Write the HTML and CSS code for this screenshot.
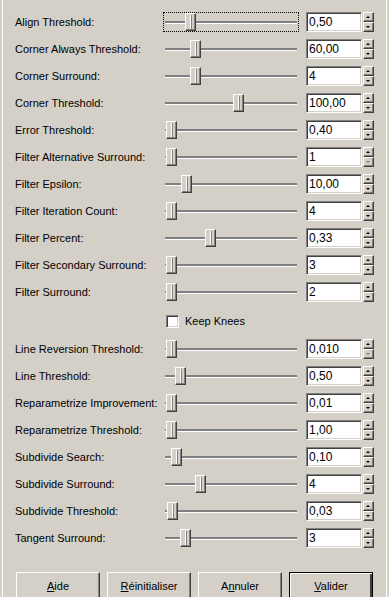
FILE: index.html
```html
<!DOCTYPE html>
<html lang="fr">
  <head>
    <meta charset="UTF-8" />
    <meta name="viewport" content="width=device-width, initial-scale=1.0" />
    <title>Potrace</title>
    <link rel="stylesheet" href="styles.css">
  </head>
  <body>
    <div class="panel">
      <div class="rows">
        <div class="row">
          <span class="label">Align Threshold:</span>
          <div class="slider focus"><div class="track"></div><div class="thumb" style="left: 22px"></div></div>
          <div class="spin"><div class="field">0,50</div><div class="arrows"><span class="arrow up"></span><span class="arrow down"></span></div></div>
        </div>
        <div class="row">
          <span class="label">Corner Always Threshold:</span>
          <div class="slider"><div class="track"></div><div class="thumb" style="left: 27px"></div></div>
          <div class="spin"><div class="field">60,00</div><div class="arrows"><span class="arrow up"></span><span class="arrow down"></span></div></div>
        </div>
        <div class="row">
          <span class="label">Corner Surround:</span>
          <div class="slider"><div class="track"></div><div class="thumb" style="left: 27px"></div></div>
          <div class="spin"><div class="field">4</div><div class="arrows"><span class="arrow up"></span><span class="arrow down"></span></div></div>
        </div>
        <div class="row">
          <span class="label">Corner Threshold:</span>
          <div class="slider"><div class="track"></div><div class="thumb" style="left: 70px"></div></div>
          <div class="spin"><div class="field">100,00</div><div class="arrows"><span class="arrow up"></span><span class="arrow down"></span></div></div>
        </div>
        <div class="row">
          <span class="label">Error Threshold:</span>
          <div class="slider"><div class="track"></div><div class="thumb" style="left: 3px"></div></div>
          <div class="spin"><div class="field">0,40</div><div class="arrows"><span class="arrow up"></span><span class="arrow down"></span></div></div>
        </div>
        <div class="row">
          <span class="label">Filter Alternative Surround:</span>
          <div class="slider"><div class="track"></div><div class="thumb" style="left: 3px"></div></div>
          <div class="spin"><div class="field">1</div><div class="arrows"><span class="arrow up"></span><span class="arrow down disabled"></span></div></div>
        </div>
        <div class="row">
          <span class="label">Filter Epsilon:</span>
          <div class="slider"><div class="track"></div><div class="thumb" style="left: 18px"></div></div>
          <div class="spin"><div class="field">10,00</div><div class="arrows"><span class="arrow up"></span><span class="arrow down"></span></div></div>
        </div>
        <div class="row">
          <span class="label">Filter Iteration Count:</span>
          <div class="slider"><div class="track"></div><div class="thumb" style="left: 3px"></div></div>
          <div class="spin"><div class="field">4</div><div class="arrows"><span class="arrow up"></span><span class="arrow down"></span></div></div>
        </div>
        <div class="row">
          <span class="label">Filter Percent:</span>
          <div class="slider"><div class="track"></div><div class="thumb" style="left: 42px"></div></div>
          <div class="spin"><div class="field">0,33</div><div class="arrows"><span class="arrow up"></span><span class="arrow down"></span></div></div>
        </div>
        <div class="row">
          <span class="label">Filter Secondary Surround:</span>
          <div class="slider"><div class="track"></div><div class="thumb" style="left: 3px"></div></div>
          <div class="spin"><div class="field">3</div><div class="arrows"><span class="arrow up"></span><span class="arrow down"></span></div></div>
        </div>
        <div class="row">
          <span class="label">Filter Surround:</span>
          <div class="slider"><div class="track"></div><div class="thumb" style="left: 3px"></div></div>
          <div class="spin"><div class="field">2</div><div class="arrows"><span class="arrow up"></span><span class="arrow down"></span></div></div>
        </div>

        <div class="check-row">
          <span class="checkbox"></span>
          <span class="check-label">Keep Knees</span>
        </div>

        <div class="row">
          <span class="label">Line Reversion Threshold:</span>
          <div class="slider"><div class="track"></div><div class="thumb" style="left: 3px"></div></div>
          <div class="spin"><div class="field">0,010</div><div class="arrows"><span class="arrow up"></span><span class="arrow down disabled"></span></div></div>
        </div>
        <div class="row">
          <span class="label">Line Threshold:</span>
          <div class="slider"><div class="track"></div><div class="thumb" style="left: 12px"></div></div>
          <div class="spin"><div class="field">0,50</div><div class="arrows"><span class="arrow up"></span><span class="arrow down"></span></div></div>
        </div>
        <div class="row">
          <span class="label">Reparametrize Improvement:</span>
          <div class="slider"><div class="track"></div><div class="thumb" style="left: 3px"></div></div>
          <div class="spin"><div class="field">0,01</div><div class="arrows"><span class="arrow up"></span><span class="arrow down"></span></div></div>
        </div>
        <div class="row">
          <span class="label">Reparametrize Threshold:</span>
          <div class="slider"><div class="track"></div><div class="thumb" style="left: 3px"></div></div>
          <div class="spin"><div class="field">1,00</div><div class="arrows"><span class="arrow up"></span><span class="arrow down"></span></div></div>
        </div>
        <div class="row">
          <span class="label">Subdivide Search:</span>
          <div class="slider"><div class="track"></div><div class="thumb" style="left: 8px"></div></div>
          <div class="spin"><div class="field">0,10</div><div class="arrows"><span class="arrow up"></span><span class="arrow down"></span></div></div>
        </div>
        <div class="row">
          <span class="label">Subdivide Surround:</span>
          <div class="slider"><div class="track"></div><div class="thumb" style="left: 32px"></div></div>
          <div class="spin"><div class="field">4</div><div class="arrows"><span class="arrow up"></span><span class="arrow down"></span></div></div>
        </div>
        <div class="row">
          <span class="label">Subdivide Threshold:</span>
          <div class="slider"><div class="track"></div><div class="thumb" style="left: 4px"></div></div>
          <div class="spin"><div class="field">0,03</div><div class="arrows"><span class="arrow up"></span><span class="arrow down"></span></div></div>
        </div>
        <div class="row">
          <span class="label">Tangent Surround:</span>
          <div class="slider"><div class="track"></div><div class="thumb" style="left: 17px"></div></div>
          <div class="spin"><div class="field">3</div><div class="arrows"><span class="arrow up"></span><span class="arrow down"></span></div></div>
        </div>
      </div>

      <div class="buttons">
        <button class="btn"><u>A</u>ide</button>
        <button class="btn"><u>R</u>éinitialiser</button>
        <button class="btn">A<u>n</u>nuler</button>
        <button class="btn default"><u>V</u>alider</button>
      </div>
    </div>
  </body>
</html>
```

FILE: styles.css
```css
body {
  margin: 0;
  background-color: #d4d0c8;
  font-family: "Liberation Sans", Arial, sans-serif;
  font-size: 11px;
  color: #000;
  overflow: hidden;
}
.panel {
  box-sizing: border-box;
  margin-left: 2px;
  width: 385px;
  height: 597px;
  padding: 8px 0 0 12px;
  border-left: 1px solid #fff;
  border-right: 1px solid #fff;
}
.row {
  display: flex;
  align-items: center;
  height: 27px;
}
.label {
  width: 148px;
  padding-top: 1px;
  white-space: nowrap;
}
.slider {
  position: relative;
  box-sizing: border-box;
  width: 136px;
  height: 20px;
  margin-right: 7px;
  margin-top: 1px;
}
.slider.focus {
  outline: 1px dotted #000;
  outline-offset: -1px;
}
.track {
  position: absolute;
  left: 2px;
  right: 2px;
  top: 9px;
  height: 2px;
  background-color: #808080;
  border-bottom: 1px solid #fff;
}
.thumb {
  position: absolute;
  top: 1px;
  box-sizing: border-box;
  width: 11px;
  height: 18px;
  background-color: #d4d0c8;
  border-top: 1px solid #fff;
  border-left: 1px solid #fff;
  border-right: 1px solid #404040;
  border-bottom: 1px solid #404040;
  box-shadow: inset -1px -1px 0 #808080;
}
.thumb::after {
  content: "";
  position: absolute;
  left: 4px;
  top: 1px;
  bottom: 1px;
  width: 1px;
  background-color: #fff;
  border-right: 1px solid #808080;
}
.spin {
  display: flex;
  align-items: center;
}
.field {
  box-sizing: border-box;
  width: 56px;
  height: 20px;
  padding-left: 2px;
  background-color: #fff;
  border-top: 1px solid #808080;
  border-left: 1px solid #808080;
  border-right: 1px solid #fff;
  border-bottom: 1px solid #fff;
  box-shadow: inset 1px 1px 0 #404040, inset -1px -1px 0 #d4d0c8;
  font-size: 12px;
  line-height: 18px;
}
.arrows {
  display: flex;
  flex-direction: column;
  margin-left: 1px;
  width: 11px;
  height: 20px;
}
.arrow {
  position: relative;
  box-sizing: border-box;
  height: 10px;
  background-color: #d4d0c8;
  border-top: 1px solid #fff;
  border-left: 1px solid #fff;
  border-right: 1px solid #404040;
  border-bottom: 1px solid #404040;
  box-shadow: inset -1px -1px 0 #808080;
}
.arrow::after {
  content: "";
  position: absolute;
  left: 2px;
  width: 0;
  height: 0;
  border-left: 2px solid transparent;
  border-right: 2px solid transparent;
}
.arrow.up::after {
  top: 3px;
  border-bottom: 2px solid #000;
}
.arrow.down::after {
  top: 3px;
  border-top: 2px solid #000;
}
.arrow.down.disabled::after {
  border-top-color: #808080;
}
.check-row {
  display: flex;
  align-items: center;
  height: 30px;
  padding-left: 151px;
}
.checkbox {
  box-sizing: border-box;
  width: 13px;
  height: 13px;
  margin-top: 2px;
  background-color: #fff;
  border-top: 1px solid #808080;
  border-left: 1px solid #808080;
  border-right: 1px solid #fff;
  border-bottom: 1px solid #fff;
  box-shadow: inset 1px 1px 0 #404040, inset -1px -1px 0 #d4d0c8;
}
.check-label {
  margin-left: 6px;
  margin-top: 2px;
}
.buttons {
  display: flex;
  gap: 7px;
  margin-top: 21px;
  padding-left: 1px;
}
.btn {
  box-sizing: border-box;
  width: 84px;
  height: 28px;
  padding: 0;
  background-color: #d4d0c8;
  font-family: "Liberation Sans", Arial, sans-serif;
  font-size: 11px;
  color: #000;
  border-top: 1px solid #fff;
  border-left: 1px solid #fff;
  border-right: 1px solid #404040;
  border-bottom: 1px solid #404040;
  box-shadow: inset -1px -1px 0 #808080;
}
.btn.default {
  border: 1px solid #000;
  box-shadow: inset 1px 1px 0 #fff, inset -2px -2px 0 #404040;
}
```
